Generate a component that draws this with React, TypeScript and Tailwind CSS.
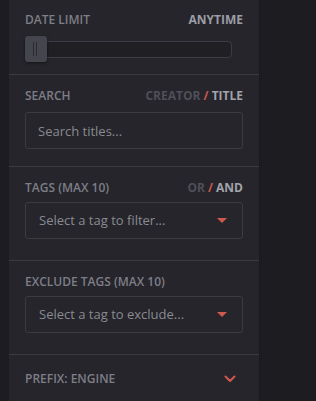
import React from 'react';

const Caret = () => (
  <svg width="10" height="5" viewBox="0 0 10 5" className="shrink-0">
    <path d="M0 0 L10 0 L5 5 Z" fill="#d0594d" />
  </svg>
);

const Label: React.FC<{ children: React.ReactNode }> = ({ children }) => (
  <span className="block text-[12px] leading-4 font-semibold uppercase text-[#7e7e87]">{children}</span>
);

const SelectBox: React.FC<{ placeholder: string }> = ({ placeholder }) => (
  <button className="w-full h-[37px] flex items-center justify-between pl-[13px] pr-[15px] rounded-[3px] border border-[#3b3b42] bg-[#25252b] text-left">
    <span className="text-[13px] text-[#8a8a91]">{placeholder}</span>
    <Caret />
  </button>
);

export default function App() {
  return (
    <div className="w-[316px] h-[401px] bg-[#1c1c21] flex overflow-hidden" style={{ fontFamily: '"Open Sans", sans-serif' }}>
      <aside className="ml-[9px] w-[251px] h-full bg-[#25252b] border-r border-[#1a1a1e] flex flex-col">
        {/* Date limit */}
        <section className="px-4 pt-[12px] pb-[12px] border-b border-[#3a3a41]">
          <div className="flex items-center justify-between">
            <Label>Date Limit</Label>
            <span className="text-[12px] leading-4 font-bold text-[#9d9da5]">ANYTIME</span>
          </div>
          <div className="relative mt-[8px] mr-[11px] h-[26px] flex items-center">
            <div className="w-full h-[17px] rounded-[4px] border border-[#3c3c44] bg-[#1f1f24]" />
            <div className="absolute left-0 top-0 w-[22px] h-[26px] rounded-[3px] bg-[#45454d] shadow-[0_1px_3px_rgba(0,0,0,0.5)] flex items-center justify-center gap-[2px] pr-[2px]">
              <span className="w-px h-[14px] bg-[#2a2a30]" />
              <span className="w-px h-[14px] bg-[#2a2a30]" />
            </div>
          </div>
        </section>

        {/* Search */}
        <section className="px-4 pt-[13px] pb-[17px] border-b border-[#3a3a41]">
          <div className="flex items-center justify-between">
            <Label>Search</Label>
            <span className="text-[12px] leading-4 font-bold">
              <span className="text-[#4f4f57]">CREATOR</span>
              <span className="text-[#c9574b]"> / </span>
              <span className="text-[#a3a3ab]">TITLE</span>
            </span>
          </div>
          <input
            placeholder="Search titles..."
            className="mt-[8px] w-full h-[37px] px-3 rounded-[3px] border border-[#3b3b42] bg-[#25252b] text-[13px] text-[#c0c0c6] placeholder:text-[#8a8a91] outline-none"
          />
        </section>

        {/* Tags */}
        <section className="px-4 pt-[13px] pb-[21px] border-b border-[#3a3a41]">
          <div className="flex items-center justify-between">
            <Label>Tags (max 10)</Label>
            <span className="text-[12px] leading-4 font-bold">
              <span className="text-[#4f4f57]">OR</span>
              <span className="text-[#c9574b]"> / </span>
              <span className="text-[#a3a3ab]">AND</span>
            </span>
          </div>
          <div className="mt-[6px]">
            <SelectBox placeholder="Select a tag to filter..." />
          </div>
        </section>

        {/* Exclude tags */}
        <section className="px-4 pt-[13px] pb-[21px] border-b border-[#3a3a41]">
          <div className="flex items-center">
            <Label>Exclude Tags (max 10)</Label>
          </div>
          <div className="mt-[6px]">
            <SelectBox placeholder="Select a tag to exclude..." />
          </div>
        </section>

        {/* Prefix */}
        <section className="px-4 pt-[16px] flex items-center justify-between">
          <Label>Prefix: Engine</Label>
          <svg width="12" height="8" viewBox="0 0 12 8" className="mr-[7px]">
            <path d="M1.5 1.5 L6 6 L10.5 1.5" fill="none" stroke="#d0594d" strokeWidth="2" strokeLinecap="round" strokeLinejoin="round" />
          </svg>
        </section>
      </aside>
    </div>
  );
}
